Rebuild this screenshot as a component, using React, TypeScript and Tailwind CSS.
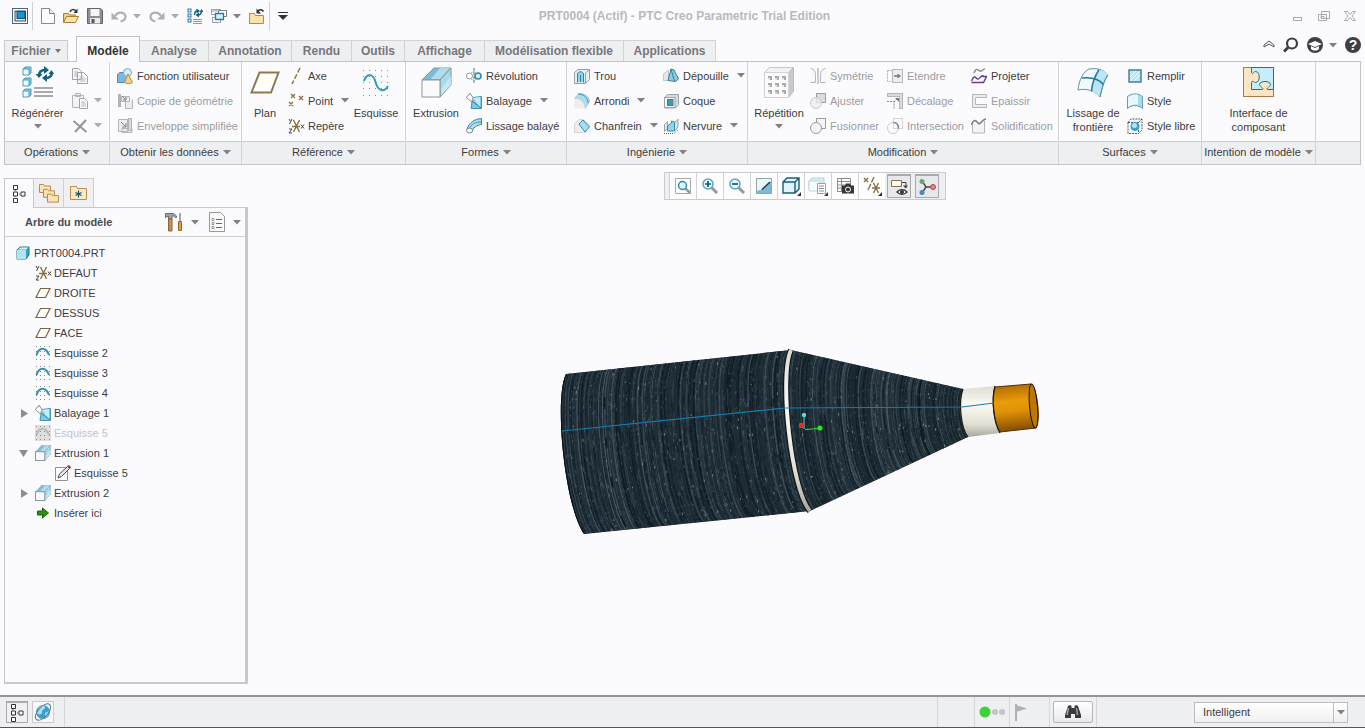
import type { ReactNode } from "react";

type IconProps = { w?: number; h?: number; box?: string; children: ReactNode };

function Svg({ w = 16, h = 16, box, children }: IconProps) {
  return (
    <svg
      width={w}
      height={h}
      viewBox={box ?? `0 0 ${w} ${h}`}
      fill="none"
      className="shrink-0"
      aria-hidden="true"
    >
      {children}
    </svg>
  );
}

function Caret({ light = false }: { light?: boolean }) {
  return (
    <Svg w={8} h={5}>
      <path d="M0 0h8L4 4.5z" fill={light ? "#acacb0" : "#808085"} />
    </Svg>
  );
}

/* ---------- quick access icons ---------- */

const AppIcon = () => (
  <Svg>
    <rect x=".5" y=".5" width="15" height="15" fill="#fff" stroke="#4d6474" />
    <rect x="3" y="3" width="10.5" height="10" fill="#d8eaf3" stroke="#2b4c60" />
    <rect x="5" y="3.5" width="8" height="7" fill="#1593d2" stroke="#14506f" />
  </Svg>
);

const NewDoc = () => (
  <Svg w={14}>
    <path d="M.5.5h8l5 5v10H.5z" fill="#fff" stroke="#85858a" />
    <path d="M8.5.5v5h5" fill="#eee" stroke="#85858a" />
  </Svg>
);

const OpenFolder = () => (
  <Svg>
    <path d="M.5 14V5.5h5l1 1.500h6v7z" fill="#f3cf83" stroke="#a87e34" />
    <path d="M.5 14.500 3.500 8.500H15.500l-3 6z" fill="#fce3a9" stroke="#a87e34" />
    <path d="M7 4c1-3 4-3 6-1" stroke="#333" strokeWidth="1.500" />
    <path d="M14.500.5v4.500h-4z" fill="#333" />
  </Svg>
);

const Save = () => (
  <Svg>
    <path d="M.5.5h13l2 2v13H.5z" fill="#8b8e96" stroke="#62656d" />
    <rect x="3.500" y="1" width="9" height="7" fill="#f4f5f7" />
    <rect x="3" y="10" width="10" height="5.500" fill="#e8e9ec" />
    <rect x="4.500" y="11" width="3" height="4" fill="#55585f" />
  </Svg>
);

const Undo = ({ flip = false }: { flip?: boolean }) => (
  <Svg>
    <g transform={flip ? "translate(16 0) scale(-1 1)" : undefined}>
      <path d="M4 8c3-5 10-4 10.500.5 0 3-2 4.500-5 5" stroke="#b0b0b4" strokeWidth="2.200" />
      <path d="M.5 4.500V11.500H8z" fill="#b0b0b4" />
    </g>
  </Svg>
);

const RegenSmall = () => (
  <Svg>
    {[1, 6, 11].map((y) => (
      <rect key={y} x="1" y={y} width="3" height="3" fill="#d8f1fb" stroke="#2e7d9f" />
    ))}
    <path d="M6 11.500h9M6 13.500h9M6 15.500h9" stroke="#98989c" />
    <path d="M7.500 7c0-3 1-4 3-4M14.500 3c0 3-1 4-4 4" stroke="#13607f" strokeWidth="1.500" />
    <path d="M9.500.5l3.500 2.500-3.500 2.500zM12 4.500v5L8.500 7zM12.500 4h4l-2-3z" fill="#13607f" />
  </Svg>
);

const WindowsIcon = () => (
  <Svg>
    <path d="M.5 1.500h9v5h-9zM.5 3h9" fill="#fff" stroke="#96a0a7" />
    <path d="M7.500 2.500h8v6h-8z" fill="#fff" stroke="#76828b" />
    <path d="M1.500 9.500h8v5h-8z" fill="#fff" stroke="#96a0a7" />
    <path d="M4.500 5.500h8v6h-8z" fill="#d7eefb" stroke="#2b7ca7" strokeWidth="1.300" />
  </Svg>
);

const CloseFolder = () => (
  <Svg>
    <path d="M.5 15.500V5.500h5l1 2h8v8z" fill="#fbe2a8" stroke="#b08a45" />
    <path d="M9 3c2-2 4-1.500 5.500.5" stroke="#333" strokeWidth="1.500" />
    <path d="M7.500.5v5h4.500z" fill="#333" />
  </Svg>
);

/* ---------- large ribbon icons ---------- */

const Regenerate = () => (
  <Svg w={32} h={34}>
    {[1, 12, 23].map((y) => (
      <g key={y} stroke="#4a9dbb" strokeLinejoin="round">
        <path d={`M1 ${y + 2}l2-2h6v6l-2 2z`} fill="#7dcbe5" />
        <rect x="1" y={y + 2} width="6" height="6" fill="#eefaff" />
      </g>
    ))}
    <path d="M12 22h19M12 26h19M12 30h19" stroke="#8d8d92" strokeWidth="1.500" />
    <path d="M17 10c0-4 2-6 6-6M30 6c0 4-2 6-6 6" stroke="#155f7c" strokeWidth="2.500" />
    <path d="M22 0l5 4-5 4zM25 8v8l-5-4zM13.500 8h7L17 12zM26.500 8H32l-2.500-4z" fill="#155f7c" />
  </Svg>
);

const Plane = ({ small = false }: { small?: boolean }) =>
  small ? (
    <Svg>
      <path d="M5.500 3.500h9.500L10.500 12.500H1z" fill="#fffdf8" stroke="#7a6544" strokeWidth="1.200" />
    </Svg>
  ) : (
    <Svg w={30} h={24}>
      <path d="M9.500 1.500h19L21 21.500H1.500z" fill="#fffefb" stroke="#8f7750" strokeWidth="2" />
    </Svg>
  );

const dots = (xs: number[], ys: number[]) =>
  ys.flatMap((y) => xs.map((x) => <rect key={`${x}-${y}`} x={x} y={y} width="1" height="1" fill="#8d8d90" />));

const SketchLarge = () => (
  <Svg w={28} h={30}>
    {dots([1, 7, 13, 19, 25], [2, 8, 14, 20, 27])}
    <path d="M2 13C5 5 11 5 13.500 14S22 25 26 18" stroke="#2f9cbe" strokeWidth="2" />
  </Svg>
);

const Extrude = ({ small = false }: { small?: boolean }) => (
  <Svg w={small ? 16 : 31} h={small ? 16 : 31} box="0 0 31 31">
    <path d="M1 13 13 1h17L19 13z" fill="#7fbbd2" stroke="#8299a5" />
    <path d="M19 13 30 1v17L19 30z" fill="#a7d9eb" stroke="#8299a5" />
    <path d="M10 12 19 1h10L19 12zM20 22 30 9v9L20 28z" fill="#d5f1fa" opacity=".6" />
    <rect x="1" y="13" width="18" height="17" fill="#fafafa" stroke="#8c979d" strokeWidth={small ? 2 : 1} />
  </Svg>
);

const Pattern = () => (
  <Svg w={30} h={31}>
    <path d="M.5 5.500 5.500.5h24l-5 5z" fill="#f2f2f4" stroke="#c6c6ca" />
    <path d="M24.500 5.500l5-5v24l-5 6z" fill="#c9c9cd" stroke="#bdbdc1" />
    <rect x=".5" y="5.500" width="24" height="25" fill="#fbfbfc" stroke="#d2d2d6" />
    {[9, 16, 23].map((y) =>
      [4, 11, 18].map((x) => (
        <g key={`${x}-${y}`}>
          <rect x={x} y={y} width="4" height="4" fill="#a9a9ae" />
          <rect x={x} y={y + 2} width="2" height="2" fill="#e6e6e9" />
        </g>
      )),
    )}
  </Svg>
);

const BoundaryBlend = () => (
  <Svg w={32} h={30}>
    <path d="M1 22C2 12 6 4 12 1c8-1 14 0 19 6-4 5-6 13-8 22-5-6-13-9-22-7z" fill="#effafe" stroke="#6d8c99" />
    <path d="M22 1.500c4 1 7 2 9 5.500-4 5-6 13-8 22-2-2-5-4-8-5.500C15 15 18 8 22 1.500z" fill="#b8e6f5" />
    <path d="M31 7c-4 5-6 13-8 22" stroke="#3b87a4" />
    <path d="M22 1.500C18 8 15 15 14.500 23.500M5 10c9-1 17 1 21.500 6.500" stroke="#237a9c" strokeWidth="1.500" />
  </Svg>
);

const ComponentInterface = () => (
  <Svg w={32} h={31}>
    <rect x=".5" y=".5" width="30" height="29" fill="#fde5c3" stroke="#a97b4a" />
    <path
      d="M8.500.5h22v22h-6c-2-1 3-3 3-5 0-4-11-4-11 0 0 2 5 4 3 5h-11v-7c1-3 2 0 4 0 5 0 5-11 0-11-2 0-3 4-4 1z"
      fill="#c5edfa"
      stroke="#28708d"
    />
  </Svg>
);

/* ---------- small ribbon icons ---------- */

const gray = "#b4b4b9";

const Copy = () => (
  <Svg>
    <path d="M.5.5h6l3 3v8h-9zM5.500 4.500h6l4 4v7h-10z" fill="#f8f8fa" stroke="#a2a2a7" />
    <path d="M2 4h4M2 6h3M2 8h3M7.500 9h4M7.500 11h6M7.500 13h6" stroke={gray} />
  </Svg>
);
const Paste = () => (
  <Svg>
    <path d="M.5 2.500h11v12H.5zM3.500.5h5v3h-5z" fill="#f4f4f6" stroke={gray} />
    <path d="M7.500 5.500h5l3 3v7h-8z" fill="#fff" stroke="#a2a2a7" />
    <path d="M9 9h4M9 11h5M9 13h5" stroke={gray} />
  </Svg>
);
const Delete = () => (
  <Svg>
    <path d="M1.500 3l13 11M14 2 3 14" stroke="#98989c" strokeWidth="2.200" />
  </Svg>
);
const UserFunction = () => (
  <Svg>
    <path d="M.5 6.500 3 4.500h8v7l-2 3H.5z" fill="#7cb8dd" stroke="#4d8cb5" />
    <circle cx="10.500" cy="4.500" r="4" fill="#d6eefa" stroke="#7ba9c2" />
    <path d="M11 6l4.500 8.500c-2 1.500-6 1.500-8 0z" fill="#f2d28a" stroke="#b48e45" />
  </Svg>
);
const CopyGeometry = () => (
  <Svg>
    <path d="M4.500 3.500h8v5h-8zM8.500 6.500v9h7v-9" fill="#ececef" stroke={gray} />
    <path d="M1 1h3v13H1z" fill="#b2b2b7" />
    <path d="M5 3l4 4M9 4v3H6" stroke="#808085" />
  </Svg>
);
const Shrinkwrap = () => (
  <Svg>
    <path d="M1.500 1.500h9v12h-9zM5 10.500h10v4H5z" fill="#ececef" stroke={gray} />
    <path d="M11.500.5h3v12h-3z" fill="#dadade" stroke="#b0b0b4" />
    <path d="M4 4l5 5M9 5v4H5" stroke="#808085" />
  </Svg>
);
const Axis = () => (
  <Svg>
    <path d="M12 0 4 16" stroke="#8a7144" strokeWidth="1.500" strokeDasharray="5 2" />
  </Svg>
);
const cross = (x: number, y: number) => `M${x} ${y}l4 4m0-4l-4 4`;
const Points = () => (
  <Svg>
    <path d={cross(3, 1) + cross(11, 3) + cross(1, 9)} stroke="#8a7144" strokeWidth="1.400" />
  </Svg>
);
const Csys = () => (
  <Svg w={17}>
    <path d="M4 8.500h8M5.500 2l6 12M11.500 2l-6 12" stroke="#8a7144" strokeWidth="1.400" />
    <path d="M1 1l1.500 2.500M4 1 1.500 6M1 11h3l-3 4h3M13 6.500l3 4m0-4l-3 4" stroke="#444" />
  </Svg>
);
const Revolve = () => (
  <Svg>
    <circle cx="3.500" cy="8" r="3" fill="#fff" stroke="#8c9aa4" />
    <circle cx="12" cy="8" r="3" fill="#cfeffb" stroke="#2c86aa" strokeWidth="1.500" />
    <path d="M8 0v16" stroke="#5f6d77" strokeDasharray="3 1" />
    <path d="M5 5c2-1.500 4-1.500 6 0M5 11c2 1.500 4 1.500 6 0" stroke="#8cc4da" />
  </Svg>
);
const Sweep = () => (
  <Svg>
    <path d="M.5 4.500 4 .5l3 4 8.500-1v12H5l1-7z" fill="#7cc9e2" stroke="#4593ae" />
    <path d="M.5 4.500 4 .5l3 4L5.500 9z" fill="#fff" stroke="#8d9ba3" />
    <path d="M7 5l7 9V4z" fill="#c2ecf8" />
    <path d="M6 8l9 7" stroke="#3487a5" />
  </Svg>
);
const SweptBlend = () => (
  <Svg>
    <path d="M1 11C3 5 8 1 15.500.5v6C10 7 7 10 6 14z" fill="#a9dff0" stroke="#467f98" />
    <path d="M4 9c3-4 6-5 11-5" stroke="#4b92ae" />
    <ellipse cx="3.500" cy="12.500" rx="3" ry="2.500" fill="#fff" stroke="#6f8691" />
  </Svg>
);
const Hole = () => (
  <Svg>
    <path d="M.5 4.500 4 1.500h11.500v10l-4 4H.5z" fill="#e6f0f4" stroke="#92a1a8" />
    <path d="M4 6c0-3 5-3 5 0v8H4z" fill="#8fd5eb" />
    <path d="M3.500 14.500V6c0-3 6-3 6 0v8.500M6.500 7v7" stroke="#2588ae" />
    <path d="M11.500 5v10M11.500 5l4-3.500" stroke="#92a1a8" />
  </Svg>
);
const Round = () => (
  <Svg>
    <path d="M.5 5.500 5 .5c6 0 10 3 10.500 8l-4.500 7c0-5-3-10-10.500-10z" fill="#a8def0" stroke="#b5c3c9" />
    <path d="M.5 5.500C7 5.500 11 10 11 15.500H.5z" fill="#ededf0" />
    <path d="M4 1c6 0 10 4 10 9" stroke="#3592b5" />
  </Svg>
);
const Chamfer = () => (
  <Svg>
    <path d="M.5 5.500 5 1.500h4l6.500 6-4 7H.5z" fill="#ececef" stroke="#d5d7d9" />
    <path d="M5 6l4-4 6.500 7-4.500 5z" fill="#a4def2" stroke="#3889a9" />
  </Svg>
);
const Draft = () => (
  <Svg>
    <path d="M.5 12.500V6l5-4v10.500z" fill="#e4e7e9" stroke="#c0c8cc" />
    <path d="M5 12.500 8 1l3 1 4.500 9-3 2.500z" fill="#8acee4" stroke="#3b7b94" />
    <path d="M8 1l3.500 12" stroke="#3b7b94" />
  </Svg>
);
const Shell = () => (
  <Svg>
    <path d="M1.500 4.500l3-3h11v10l-3 3.500h-11z" fill="#d7dbde" stroke="#9aa4a9" />
    <rect x="1.500" y="4.500" width="10.500" height="10" fill="#f7f8f9" stroke="#9aa4a9" />
    <rect x="4.500" y="6.500" width="5.500" height="6" fill="#3a9cb4" stroke="#587985" />
  </Svg>
);
const Rib = () => (
  <Svg>
    <path d="M1 15.500h10l4.500-4" stroke="#5b6a72" strokeDasharray="1 1" />
    <path d="M1.500 6.500v7l3-3v-7zM11.500 5v8l3.500-4V1z" fill="#dce5e9" stroke="#96a5ac" />
    <path d="M4.500 13V8l4-3v-2l3 1v9z" fill="#8dd5eb" stroke="#348db0" />
  </Svg>
);
const Mirror = () => (
  <Svg>
    <path d="M.5.5c4 1 5 3 5 7v7h-5M15.500.5c-4 1-5 3-5 7v7h5" fill="#f8f8fa" stroke={gray} />
    <path d="M8 0v16" stroke="#99999e" />
  </Svg>
);
const Trim = () => (
  <Svg>
    <path d="M6.500.5h9v9h-9z" fill="#dcdce0" stroke="#9d9da2" />
    <circle cx="6" cy="10" r="5.500" fill="#ececef" fillOpacity=".8" stroke="#cacace" />
  </Svg>
);
const Merge = () => (
  <Svg>
    <path d="M6.500 4.500v-4h9v10h-4" fill="#f6f6f8" stroke="#99999e" />
    <circle cx="6" cy="10" r="5.500" fill="#f5f5f7" stroke="#99999e" />
  </Svg>
);
const Extend = () => (
  <Svg>
    <path d="M.5 2.500h5v11h-5z" stroke={gray} strokeDasharray="2 1" />
    <path d="M5.500 1.500h10v13h-10z" fill="#ededf0" stroke={gray} />
    <path d="M7 8h5" stroke="#77777c" strokeWidth="1.500" />
    <path d="M10.500 5.500l3.500 2.500-3.500 2.500z" fill="#77777c" />
  </Svg>
);
const Offset = () => (
  <Svg>
    <path d="M.5.5h15v15h-3V3.500H.5z" fill="#dcdce0" stroke={gray} />
    <path d="M0 8.500h7v7M7 9l4-4" stroke="#88888d" strokeDasharray="2 1" />
    <path d="M8 5h4v4z" fill="#77777c" />
  </Svg>
);
const Intersect = () => (
  <Svg>
    <path d="M6.500.5h9v10h-9z" stroke="#d3d3d7" />
    <circle cx="6" cy="10" r="5.500" stroke="#cacace" />
    <path d="M6.500 4.500c4 0 5 3 5 6" stroke="#88888d" strokeWidth="1.500" />
  </Svg>
);
const Project = () => (
  <Svg>
    <path d="M3 5c2-6 4-3 6-2s4-3 5-2" stroke="#88888f" strokeWidth="1.500" />
    <path d="M.5 14.500h12l3-6h-4M.5 13c3-7 4-3 6-2s4-5 6-3" stroke="#68388f" strokeWidth="1.400" />
  </Svg>
);
const Thicken = () => (
  <Svg>
    <path d="M15.500 1.500H1.500v13h14v-3h-11v-7h11z" fill="#ececef" stroke={gray} />
  </Svg>
);
const Solidify = () => (
  <Svg>
    <path d="M1.500 5v10h12V3" fill="#f3f3f5" stroke={gray} />
    <path d="M0 7c3-6 5-5 7-2s4-4 8-4" stroke="#7d7d82" strokeWidth="1.600" />
  </Svg>
);
const Fill = () => (
  <Svg>
    <rect x="2" y="2" width="12" height="12" fill="#b8e7f7" stroke="#2b708e" strokeWidth="1.300" />
    <path d="M3 9l6-6M3 13 13 3M7 13l6-6" stroke="#eefaff" />
  </Svg>
);
const StyleIcon = () => (
  <Svg>
    <path d="M.5 15.500v-12C5 0 11 0 15.500 3.500v12c-4-4-11-4-15 0z" fill="#a4dcf0" stroke="#6c99ac" />
    <path d="M1 4c3-2 6-3 10-2v10c-4-1-7 0-10 2z" fill="#e6f8fd" />
  </Svg>
);
const Freestyle = () => (
  <Svg>
    <path d="M1 4.500 4 1h11v11l-3.500 3.500H1zM1 4.500h10.500v11M11.500 4.500 15 1" stroke="#4b5961" strokeDasharray="2 1" />
    <circle cx="8" cy="8.500" r="4.500" fill="#3aa1c8" />
    <circle cx="7.500" cy="7.500" r="2.500" fill="#b6e4f4" />
  </Svg>
);

/* ---------- view toolbar and tree icons ---------- */

const Lens = ({ sign }: { sign: string }) => (
  <Svg w={18} h={18}>
    <path d="M10 10l6 6" stroke="#98989d" strokeWidth="3" />
    <circle cx="7" cy="7" r="5" fill="#e6f8fe" stroke="#5ba6c2" strokeWidth="1.500" />
    <path d={sign} stroke="#145c79" strokeWidth="1.700" />
  </Svg>
);
const Refit = () => (
  <Svg w={18} h={18}>
    <path d="M1.500 1.500h15v15h-15z" fill="#fff" stroke="#a8a8ad" />
    <path d="M11 11l5 5" stroke="#98989d" strokeWidth="2.500" />
    <circle cx="8.500" cy="8.500" r="4" fill="#dff6fd" stroke="#338bab" strokeWidth="1.500" />
  </Svg>
);
const Repaint = () => (
  <Svg w={18} h={18}>
    <path d="M1.500 1.500h15v15h-15z" fill="#c9eaf5" stroke="#93a2aa" />
    <path d="M2 12 16 4v12H2z" fill="#7bbcd4" />
    <path d="M2 2h14v3L7 12 2 14z" fill="#e9f7fb" />
    <path d="M15 5 7 12.500" stroke="#203b48" strokeWidth="1.500" />
  </Svg>
);
const Corner = () => <path d="M20 16v4h-4z" fill="#333" />;
const DisplayStyle = () => (
  <Svg w={20} h={20}>
    <path d="M2 6l4-4h12v11l-4 4H2zM2 6h12v11M14 6l4-4" fill="#dff5fd" stroke="#175d7a" strokeWidth="1.400" />
    <Corner />
  </Svg>
);
const SavedViews = () => (
  <Svg w={20} h={20}>
    <path d="M1 5l3-3h12v11H1z" fill="#d3eef8" stroke="#b0d2df" />
    <path d="M1 5h11v10H1z" fill="#f7fcfe" stroke="#c4d3d9" />
    <path d="M9.500 7.500h8v10h-8z" fill="#fff" stroke="#a0a0a4" />
    <path d="M11 10h5M11 12.500h5M11 15h5" stroke="#8c8c90" />
    <Corner />
  </Svg>
);
const ViewManager = () => (
  <Svg w={18} h={18}>
    <path d="M1.500 1.500h13v13h-13zM1.500 4.500h13M1.500 8h13M1.500 11h13M5.500 2v12" fill="#fff" stroke="#8b8b90" />
    <path d="M6 8.500h3l1-2h4l1 2h3v8H6z" fill="#36363a" />
    <circle cx="12" cy="12.500" r="2.500" fill="#36363a" stroke="#fff" />
  </Svg>
);
const DatumFilter = () => (
  <Svg w={20} h={20}>
    <path d={cross(2, 2) + "M12 1 6 14"} stroke="#8a7144" strokeWidth="1.400" />
    <path d="M10 12h8M11.500 7l5 10M16.500 7l-5 10" stroke="#8a7144" strokeWidth="1.400" />
    <path d="M8 6l2 2" stroke="#fdfdfe" strokeWidth="1.500" />
    <Corner />
  </Svg>
);
const Annotations = () => (
  <Svg w={18} h={18}>
    <path d="M1.500 2.500h10v6h-10z" fill="#fffdf6" stroke="#8a7144" />
    <path d="M12 4.500h4v5" stroke="#444" />
    <path d="M13 7.500h5l-2.500 3z" fill="#444" />
    <path d="M7 14c3-3 7-3 10 0-3 3-7 3-10 0z" fill="#fff" stroke="#333" strokeWidth="1.300" />
    <circle cx="12" cy="14" r="2" fill="#333" />
  </Svg>
);
const SpinCenter = () => (
  <Svg w={18} h={18}>
    <path d="M4 3l4 6h7M8 9l-4 6" stroke="#44444a" strokeWidth="1.400" />
    <circle cx="4" cy="3.500" r="2.500" fill="#67a868" />
    <circle cx="15" cy="9" r="2.500" fill="#e08582" stroke="#aa4b49" />
    <circle cx="4" cy="14.500" r="2.500" fill="#4b87b5" />
  </Svg>
);
const TreeIcon = () => (
  <Svg w={14} h={18}>
    <path d="M3 3v12M3 9h8" stroke="#555" strokeDasharray="1 1" />
    <path d="M1.500.5h4v4h-4zM1.500 7h4v4h-4zM1.500 13.500h4v4h-4zM9 7h4v4H9z" fill="#fff" stroke="#333" />
  </Svg>
);
const folder = (x: number, y: number) => `M${x} ${y + 9}v-8h4l1 1.500h6v6.500z`;
const Folders = () => (
  <Svg w={20} h={20}>
    {[0, 4, 8].map((n) => (
      <path key={n} d={folder(0.5 + n, 0.5 + n * 1.2)} fill="#fbe3b2" stroke="#b38e50" />
    ))}
  </Svg>
);
const Favorites = () => (
  <Svg w={17} h={16}>
    <path d="M.5 14.500V1.500h6l1 2h9v11z" fill="#fce9c1" stroke="#b38e50" />
    <path d="M8.500 5.500v7M5.500 7.500l6 3M11.500 7.500l-6 3" stroke="#164f69" strokeWidth="1.200" />
  </Svg>
);
const Tools = () => (
  <Svg w={18} h={20}>
    <path d="M.5 5.500V1.500h8l3 2.500v1.500h-1l-2-1.500H7v3H3.500V4z" fill="#a0a4aa" stroke="#6a6d72" />
    <path d="M3.500 7H7v12H3.500z" fill="#c59254" stroke="#8b6433" />
    <path d="M15 1v9" stroke="#88888d" strokeWidth="1.500" />
    <path d="M13.500 9.500h3v9h-3z" fill="#dda243" stroke="#9a6826" />
  </Svg>
);
const ListDoc = () => (
  <Svg w={16} h={20}>
    <path d="M.5.5h11l4 4v15H.5z" fill="#fafafb" stroke="#98989d" />
    <path d="M7 7.500h6M7 11.500h6M7 15.500h6" stroke="#66666b" />
    <path d="M3 6.500h2v2H3zM3 10.500h2v2H3zM3 14.500h2v2H3z" stroke="#88888d" strokeWidth=".8" />
  </Svg>
);
const Part = () => (
  <Svg w={14} h={14}>
    <path d="M1 4l3-3h9v8l-3 4H1z" fill="#3e9fc4" stroke="#28708c" />
    <path d="M1 4h9v9H1z" fill="#aee5f7" />
    <path d="M2 3.500 4.500 1.500h8L10 3.500z" fill="#dff7fe" />
  </Svg>
);
const SketchSmall = ({ dim = false }: { dim?: boolean }) => (
  <Svg>
    {dim && <rect width="16" height="16" fill="#dfdfdf" />}
    {dots([1, 5, 9, 14], [1, 6, 10, 14])}
    <path d="M1.500 10C4 1.500 11 1.500 14 10" stroke={dim ? "#b9b9b9" : "#398eae"} strokeWidth="2" />
  </Svg>
);
const EditSketch = () => (
  <Svg>
    <path d="M.5 2.500h12v13H.5z" fill="#fff" stroke="#929297" />
    <path d="M3 13l1.500-4 8-7.500 2 2-8 8z" fill="#e7e7e9" stroke="#4b4b4f" />
    <path d="M12 1l2-1 2 2-1 2z" fill="#a33835" />
  </Svg>
);
const Insert = () => (
  <Svg w={12} h={12}>
    <path d="M.5 4h5V1l6 5-6 5V8h-5z" fill="#2d8c18" stroke="#1c650d" />
  </Svg>
);

/* ---------- ribbon building blocks ---------- */

type CmdProps = { icon: ReactNode; label: string; caret?: boolean; off?: boolean };

function Cmd({ icon, label, caret, off }: CmdProps) {
  return (
    <button
      disabled={off}
      className="flex h-[25px] items-center gap-1 whitespace-nowrap text-[#3c3c40] disabled:text-[#9b9b9f]"
    >
      <span className="flex w-4 justify-center">{icon}</span>
      <span>{label}</span>
      {caret && (
        <span className="ml-1">
          <Caret />
        </span>
      )}
    </button>
  );
}

function Big({ icon, lines, caret, width }: { icon: ReactNode; lines: string[]; caret?: boolean; width: string }) {
  return (
    <button className={`flex flex-col items-center ${width}`}>
      <span className="mb-1 flex h-[39px] items-center">{icon}</span>
      {lines.map((line) => (
        <span key={line} className="leading-[14px] whitespace-nowrap">
          {line}
        </span>
      ))}
      {caret && (
        <span className="pt-1">
          <Caret />
        </span>
      )}
    </button>
  );
}

function Group({ title, width, pad = "", children }: { title: string; width: string; pad?: string; children: ReactNode }) {
  return (
    <section className={`flex shrink-0 flex-col border-r border-[#d3d3d6] ${width}`}>
      <div className={`flex h-[79px] items-start pt-px ${pad}`}>{children}</div>
      <button className="flex h-[23px] items-center justify-center gap-1 border-t border-[#cbcbce] bg-[#eeeff1] pb-0.5 whitespace-nowrap">
        {title}
        <Caret />
      </button>
    </section>
  );
}

function Column({ width = "", children }: { width?: string; children: ReactNode }) {
  return <div className={`flex flex-col items-start ${width}`}>{children}</div>;
}

function QuickAccess() {
  return (
    <div className="flex items-center gap-2">
      <div className="flex items-center gap-1">
        <button aria-label="Creo"><AppIcon /></button>
        <span className="h-7 w-px bg-[#d0d0d3]" />
      </div>
      <button aria-label="Nouveau"><NewDoc /></button>
      <button aria-label="Ouvrir"><OpenFolder /></button>
      <button aria-label="Enregistrer"><Save /></button>
      <div className="flex items-center gap-1.5">
        <button aria-label="Annuler"><Undo /></button>
        <button aria-label="Historique d'annulation"><Caret light /></button>
      </div>
      <div className="flex items-center gap-1.5">
        <button aria-label="Rétablir"><Undo flip /></button>
        <button aria-label="Historique de rétablissement"><Caret light /></button>
      </div>
      <button aria-label="Régénérer"><RegenSmall /></button>
      <div className="flex items-center gap-1.5">
        <button aria-label="Fenêtres"><WindowsIcon /></button>
        <button aria-label="Liste des fenêtres"><Caret /></button>
      </div>
      <div className="flex items-center gap-1">
        <button aria-label="Fermer"><CloseFolder /></button>
        <span className="h-7 w-px bg-[#d0d0d3]" />
      </div>
      <button aria-label="Personnaliser">
        <Svg w={10} h={8}>
          <path d="M0 .5h10" stroke="#333" />
          <path d="M0 3h10L5 8z" fill="#333" />
        </Svg>
      </button>
    </div>
  );
}

function TitleBar() {
  return (
    <header className="grid h-8 grid-cols-[1fr_auto_1fr] items-center pr-2 pl-3">
      <QuickAccess />
      <h1 className="text-xs font-bold text-[#b9b9bd]">PRT0004 (Actif) - PTC Creo Parametric Trial Edition</h1>
      <div className="flex justify-end gap-3">
        <button aria-label="Réduire">
          <Svg><path d="M4.500 9.500h8v3h-8z" stroke="#a8a8ac" /></Svg>
        </button>
        <button aria-label="Restaurer">
          <Svg w={14}>
            <path d="M4.500 3.500h8v7h-8zM1.500 6.500h8v6h-8zM4 8.500h3v2H4z" fill="#fff" stroke="#a8a8ac" />
          </Svg>
        </button>
        <button aria-label="Fermer la fenêtre">
          <Svg w={14}>
            <path d="M1.500 3.500h3l2.500 3 2.500-3h3L9 8l3.500 4.500h-3L7 9.500l-2.500 3h-3L5 8z" stroke="#a8a8ac" />
          </Svg>
        </button>
      </div>
    </header>
  );
}

const tabs = [
  ["Analyse", "w-[69px]"],
  ["Annotation", "w-[83px]"],
  ["Rendu", "w-[60px]"],
  ["Outils", "w-[53px]"],
  ["Affichage", "w-[80px]"],
  ["Modélisation flexible", "w-[139px]"],
  ["Applications", "w-[92px]"],
];

function RibbonTabs() {
  return (
    <div className="flex h-[29px] items-end px-1 text-xs font-bold text-[#77777b]">
      <button className="mr-2 flex h-[21px] w-16 items-center justify-center gap-1 border border-b-0 border-[#cbcbce] bg-[#eeeff1]">
        Fichier <Svg w={6} h={4}><path d="M0 0h6L3 4z" fill="#77777c" /></Svg>
      </button>
      <nav className="flex items-end">
        <button className="z-10 -mb-px h-[26px] w-16 border border-b-0 border-[#c3c3c6] bg-[#fbfbfe] pt-0.5 text-[#333]">
          Modèle
        </button>
        {tabs.map(([name, width]) => (
          <button key={name} className={`h-[21px] border-t border-r border-[#d3d3d6] bg-[#eeeff1] whitespace-nowrap ${width}`}>
            {name}
          </button>
        ))}
      </nav>
      <div className="ml-auto flex items-center gap-2 pb-2">
        <button aria-label="Réduire le ruban">
          <Svg w={12} h={10}><path d="M1 5l5-4 5 4v2L6 4 1 7z" stroke="#55555a" /></Svg>
        </button>
        <button aria-label="Rechercher">
          <Svg>
            <circle cx="9" cy="6.500" r="5" stroke="#3f3f43" strokeWidth="2.200" />
            <path d="M5.500 10 1 14.500" stroke="#3f3f43" strokeWidth="3" />
          </Svg>
        </button>
        <button aria-label="Apprentissage" className="flex items-center gap-1.5">
          <Svg>
            <circle cx="8" cy="8" r="8" fill="#3f3f43" />
            <path d="M1 7l7-3 7 3-7 3z" fill="#fff" />
            <path d="M4 9v3c2 2 6 2 8 0V9l-4 2z" fill="#fff" />
          </Svg>
          <Caret />
        </button>
        <button aria-label="Aide" className="flex size-4 items-center justify-center rounded-full bg-[#3f3f43] text-sm leading-4 text-white">
          ?
        </button>
      </div>
    </div>
  );
}

function Ribbon() {
  return (
    <div className="mx-1 flex overflow-hidden border border-[#c3c3c6] whitespace-nowrap">
      <Group title="Opérations" width="w-[105px]">
        <Big icon={<Regenerate />} lines={["Régénérer"]} caret width="w-[65px]" />
        <div className="flex flex-col">
          <button aria-label="Copier" className="flex h-[25px] items-center pl-0.5"><Copy /></button>
          <button aria-label="Coller" className="flex h-[25px] items-center gap-1.5 pl-0.5"><Paste /><Caret light /></button>
          <button aria-label="Supprimer" className="flex h-[25px] items-center gap-1.5 pl-0.5"><Delete /><Caret light /></button>
        </div>
      </Group>
      <Group title="Obtenir les données" width="w-[132px]" pad="pl-[7px]">
        <Column>
          <Cmd icon={<UserFunction />} label="Fonction utilisateur" />
          <Cmd icon={<CopyGeometry />} label="Copie de géométrie" off />
          <Cmd icon={<Shrinkwrap />} label="Enveloppe simplifiée" off />
        </Column>
      </Group>
      <Group title="Référence" width="w-[164px]">
        <Big icon={<Plane />} lines={["Plan"]} width="w-[46px]" />
        <Column width="w-[60px]">
          <Cmd icon={<Axis />} label="Axe" />
          <Cmd icon={<Points />} label="Point" caret />
          <Cmd icon={<Csys />} label="Repère" />
        </Column>
        <Big icon={<SketchLarge />} lines={["Esquisse"]} width="w-[56px]" />
      </Group>
      <Group title="Formes" width="w-[161px]">
        <Big icon={<Extrude />} lines={["Extrusion"]} width="w-[60px]" />
        <Column>
          <Cmd icon={<Revolve />} label="Révolution" />
          <Cmd icon={<Sweep />} label="Balayage" caret />
          <Cmd icon={<SweptBlend />} label="Lissage balayé" />
        </Column>
      </Group>
      <Group title="Ingénierie" width="w-[181px]" pad="pl-[7px]">
        <Column width="w-[89px]">
          <Cmd icon={<Hole />} label="Trou" />
          <Cmd icon={<Round />} label="Arrondi" caret />
          <Cmd icon={<Chamfer />} label="Chanfrein" caret />
        </Column>
        <Column>
          <Cmd icon={<Draft />} label="Dépouille" caret />
          <Cmd icon={<Shell />} label="Coque" />
          <Cmd icon={<Rib />} label="Nervure" caret />
        </Column>
      </Group>
      <Group title="Modification" width="w-[311px]">
        <Big icon={<Pattern />} lines={["Répétition"]} caret width="w-[62px]" />
        <Column width="w-[77px]">
          <Cmd icon={<Mirror />} label="Symétrie" off />
          <Cmd icon={<Trim />} label="Ajuster" off />
          <Cmd icon={<Merge />} label="Fusionner" off />
        </Column>
        <Column width="w-[84px]">
          <Cmd icon={<Extend />} label="Etendre" off />
          <Cmd icon={<Offset />} label="Décalage" off />
          <Cmd icon={<Intersect />} label="Intersection" off />
        </Column>
        <Column>
          <Cmd icon={<Project />} label="Projeter" />
          <Cmd icon={<Thicken />} label="Epaissir" off />
          <Cmd icon={<Solidify />} label="Solidification" off />
        </Column>
      </Group>
      <Group title="Surfaces" width="w-[143px]">
        <Big icon={<BoundaryBlend />} lines={["Lissage de", "frontière"]} width="w-[68px]" />
        <Column>
          <Cmd icon={<Fill />} label="Remplir" />
          <Cmd icon={<StyleIcon />} label="Style" />
          <Cmd icon={<Freestyle />} label="Style libre" />
        </Column>
      </Group>
      <Group title="Intention de modèle" width="w-[114px]" pad="justify-center">
        <Big icon={<ComponentInterface />} lines={["Interface de", "composant"]} width="w-[80px]" />
      </Group>
      <div className="flex flex-1 flex-col justify-end">
        <div className="h-[23px] border-t border-[#cbcbce] bg-[#eeeff1]" />
      </div>
    </div>
  );
}

/* ---------- model tree ---------- */

type Node = { label: string; icon: ReactNode; level: 0 | 1 | 2; arrow?: "open" | "closed"; off?: boolean };

const nodes: Node[] = [
  { label: "PRT0004.PRT", icon: <Part />, level: 0 },
  { label: "DEFAUT", icon: <Csys />, level: 1 },
  { label: "DROITE", icon: <Plane small />, level: 1 },
  { label: "DESSUS", icon: <Plane small />, level: 1 },
  { label: "FACE", icon: <Plane small />, level: 1 },
  { label: "Esquisse 2", icon: <SketchSmall />, level: 1 },
  { label: "Esquisse 3", icon: <SketchSmall />, level: 1 },
  { label: "Esquisse 4", icon: <SketchSmall />, level: 1 },
  { label: "Balayage 1", icon: <Sweep />, level: 1, arrow: "closed" },
  { label: "Esquisse 5", icon: <SketchSmall dim />, level: 1, off: true },
  { label: "Extrusion 1", icon: <Extrude small />, level: 1, arrow: "open" },
  { label: "Esquisse 5", icon: <EditSketch />, level: 2 },
  { label: "Extrusion 2", icon: <Extrude small />, level: 1, arrow: "closed" },
  { label: "Insérer ici", icon: <Insert />, level: 1 },
];

const indents = ["pl-[10px]", "pl-[14px]", "pl-[50px]"];

function ModelTree() {
  return (
    <aside className="ml-1 flex w-[244px] shrink-0 flex-col pt-[13px] pb-[11px]">
      <div className="flex h-[29px]">
        <button aria-label="Arbre du modèle" className="z-10 -mb-px flex w-[30px] items-center justify-center border border-b-0 border-[#c8c8cb] bg-[#fbfbfe]">
          <TreeIcon />
        </button>
        <button aria-label="Dossiers" className="flex w-[30px] items-center justify-center border-t border-r border-[#cfcfd2] bg-[#f0f0f2]">
          <Folders />
        </button>
        <button aria-label="Favoris" className="flex w-[30px] items-center justify-center border-t border-r border-[#cfcfd2] bg-[#f0f0f2]">
          <Favorites />
        </button>
      </div>
      <div className="flex-1 border border-r-[3px] border-b-2 border-[#c8c8cb]">
        <div className="flex h-[29px] items-center border-b border-[#cfcfd2] pr-1 pl-5">
          <h2 className="flex-1 font-bold text-[#4c4c50]">Arbre du modèle</h2>
          <button aria-label="Réglages" className="mr-2.5 flex items-center gap-2"><Tools /><Caret /></button>
          <button aria-label="Affichage" className="flex items-center gap-2"><ListDoc /><Caret /></button>
        </div>
        <ul className="pt-[6px]">
          {nodes.map((n, i) => (
            <li key={i} className={`flex h-5 items-center ${indents[n.level]}`}>
              {n.level === 1 && (
                <span className="flex w-4 items-center">
                  {n.arrow && (
                    <button aria-label={n.label}>
                      <Svg w={10} h={9}>
                        <path d={n.arrow === "open" ? "M0 1h9L4.500 8z" : "M2 0v9l7-4.500z"} fill="#8c8c91" />
                      </Svg>
                    </button>
                  )}
                </span>
              )}
              <span className="mr-[3px] flex w-4 justify-center">{n.icon}</span>
              <span className={n.off ? "text-[#c4c4c7]" : ""}>{n.label}</span>
            </li>
          ))}
        </ul>
      </div>
    </aside>
  );
}

/* ---------- bottle model ---------- */

// small linear congruential generator, so the texture is stable between renders
function makeRandom(seed: number) {
  let s = seed;
  return () => {
    s = (s * 1664525 + 1013904223) % 4294967296;
    return s / 4294967296;
  };
}

// section curves: start, two control points, end
const bottom = [567, 374, 555, 397, 565, 505, 585, 534];
const shoulder = [792, 350, 780, 375, 792, 490, 811, 511];
const neck = [964, 389, 959, 402, 962, 428, 969, 437];

const mix = (a: number[], b: number[], t: number) => a.map((v, i) => v + (b[i] - v) * t);
const curve = (p: number[]) => `M${p[0]} ${p[1]}C${p[2]} ${p[3]} ${p[4]} ${p[5]} ${p[6]} ${p[7]}`;

function pointOn(p: number[], t: number) {
  const u = 1 - t;
  const k = [u * u * u, 3 * t * u * u, 3 * t * t * u, t * t * t];
  return [
    k[0] * p[0] + k[1] * p[2] + k[2] * p[4] + k[3] * p[6],
    k[0] * p[1] + k[1] * p[3] + k[2] * p[5] + k[3] * p[7],
  ];
}

function buildTexture() {
  const rnd = makeRandom(41);
  const tones = ["#0c171d", "#121f27", "#1b2932", "#25343e", "#30404a", "#3d4e59", "#536670"];
  const out: ReactNode[] = [];
  const section = (a: number[], b: number[], count: number, name: string) => {
    for (let i = 0; i < count; i++) {
      const light = rnd();
      out.push(
        <path
          key={`${name}${i}`}
          d={curve(mix(a, b, rnd()))}
          stroke={tones[Math.floor(Math.pow(light, 1.4) * 7)]}
          strokeWidth={0.5 + rnd()}
          strokeDasharray={i % 3 ? `${10 + rnd() * 60} ${rnd() * 20}` : undefined}
          opacity={0.35 + rnd() * 0.35}
        />,
      );
    }
    for (let i = 0; i < count * 5; i++) {
      const p = mix(a, b, rnd());
      const t = rnd();
      const [x, y] = pointOn(p, t);
      const [x2, y2] = pointOn(p, Math.min(1, t + 0.006 + rnd() * 0.014));
      out.push(
        <path
          key={`${name}s${i}`}
          d={`M${x} ${y}L${x2} ${y2}`}
          stroke={rnd() > 0.5 ? "#74858e" : "#0a1318"}
          strokeWidth=".8"
          opacity={0.15 + rnd() * 0.4}
        />,
      );
    }
    for (let i = 0; i < count / 6; i++) {
      const [x, y] = pointOn(mix(a, b, rnd()), rnd());
      out.push(<rect key={`${name}d${i}`} x={x} y={y} width="1" height={1 + rnd() * 2} fill="#a3b1b8" opacity=".6" />);
    }
  };
  section(bottom, shoulder, 420, "b");
  section(shoulder, neck, 300, "c");
  return out;
}

const texture = buildTexture();

function Bottle() {
  return (
    <svg width="490" height="195" viewBox="561 345 490 195" fill="none" className="max-w-full" role="img" aria-label="PRT0004">
      <defs>
        <linearGradient id="label" x1="0" y1="0" x2="0" y2="1">
          <stop offset="0" stopColor="#dddbd2" />
          <stop offset=".35" stopColor="#fbfaf3" />
          <stop offset=".75" stopColor="#e2dfd4" />
          <stop offset="1" stopColor="#a8a59c" />
        </linearGradient>
        <linearGradient id="gold" x1="0" y1="0" x2="0.1" y2="1">
          <stop offset="0" stopColor="#a76400" />
          <stop offset=".4" stopColor="#e99c09" />
          <stop offset=".6" stopColor="#df9205" />
          <stop offset="1" stopColor="#874e00" />
        </linearGradient>
        <clipPath id="shape">
          <path d="M567 374 792 350 964 389C959 402 962 428 969 437L811 511 585 534C565 505 555 397 567 374z" />
        </clipPath>
      </defs>
      <g clipPath="url(#shape)">
        <rect x="560" y="345" width="420" height="195" fill="#202e37" />
        {texture}
        <path d={curve(bottom)} stroke="#07131a" strokeWidth="2" />
      </g>
      <path d={curve(shoulder)} stroke="#0b1318" strokeWidth="6" />
      <path d={curve(shoulder)} stroke="url(#label)" strokeWidth="4" />
      <path d="M964 389 996 386C992 400 995 423 1001 433L969 437C962 428 959 402 964 389z" fill="url(#label)" />
      <path d="M996 387 1032 384C1038 386 1042 421 1037 428L1001 432C995 423 992 400 996 387z" fill="url(#gold)" stroke="#513108" />
      <path d="M996 386C992 400 995 423 1001 433M964 389C959 402 962 428 969 437" stroke="#171613" strokeWidth="1.200" />
      <ellipse cx="1034.500" cy="406" rx="4" ry="22" transform="rotate(-5 1034.500 406)" fill="#bd7605" stroke="#171613" />
      <path d="M563 431 786 408 963 407 995 403" stroke="#147eb3" strokeWidth="1.200" />
      <path d="M805 416v13" stroke="#65d4d8" />
      <path d="M806 429.500 820 428.500" stroke="#42df31" />
      <circle cx="805" cy="415" r="2.200" fill="#54dada" />
      <circle cx="821" cy="428" r="2.600" fill="#32e221" />
      <rect x="800" y="423" width="5" height="5" rx="1" fill="#ed2b23" />
    </svg>
  );
}

const viewTools: [string, ReactNode][] = [
  ["Réajuster", <Refit />],
  ["Zoom avant", <Lens sign="M7 4v6M4 7h6" />],
  ["Zoom arrière", <Lens sign="M4 7h6" />],
  ["Redessiner", <Repaint />],
  ["Style d'affichage", <DisplayStyle />],
  ["Vues enregistrées", <SavedViews />],
  ["Gestionnaire de vues", <ViewManager />],
  ["Filtres d'affichage", <DatumFilter />],
];

function Viewport() {
  return (
    <main className="flex min-w-0 flex-1 flex-col items-center pt-[7px] pr-1">
      <div className="flex h-[28px] border border-[#cbcbce] bg-[#eeeff1] px-1">
        {viewTools.map(([name, icon]) => (
          <button key={name} aria-label={name} className="flex w-[27px] items-center justify-center border-l border-[#d3d3d6] bg-[#fdfdfe]">
            {icon}
          </button>
        ))}
        <button aria-label="Annotations" aria-pressed="true" className="mx-0.5 my-px flex w-6 items-center justify-center border border-t-2 border-[#aaaaae] bg-[#e7e8eb]">
          <Annotations />
        </button>
        <button aria-label="Centre de rotation" aria-pressed="true" className="mx-0.5 my-px flex w-6 items-center justify-center border border-t-2 border-[#aaaaae] bg-[#e7e8eb]">
          <SpinCenter />
        </button>
      </div>
      <div className="pt-[145px]">
        <Bottle />
      </div>
    </main>
  );
}

function StatusBar() {
  return (
    <footer className="flex h-[33px] shrink-0 items-stretch border-t-2 border-b border-t-[#949498] border-b-[#55555a] bg-[#eeeff1] pr-[17px] pl-[6px]">
      <div className="flex items-center gap-1 border-r border-[#d6d6d9] pr-2.5">
        <button aria-label="Arbre" className="flex h-[22px] w-[22px] items-center justify-center border border-t-2 border-[#aaaaae] bg-[#f0f0f2]">
          <TreeIcon />
        </button>
        <button aria-label="Navigateur" className="flex h-[22px] w-[22px] items-center justify-center border border-[#cbcbce] bg-[#f8f8fa]">
          <Svg w={18} h={18}>
            <circle cx="9" cy="9" r="7" fill="#3d9dcf" />
            <path d="M4 5c3-3 6-3 7-1s-4 3-3 5-3 4-5 1zM11 10l4-2c0 4-2 6-4 7z" fill="#a6ddf3" />
            <ellipse cx="9" cy="9" rx="10" ry="5" transform="rotate(-48 9 9)" stroke="#4c7689" />
          </Svg>
        </button>
      </div>
      <div className="ml-auto w-[37px] border-l border-[#d6d6d9]" />
      <div className="flex w-9 items-center justify-center border-x border-[#d6d6d9]">
        <Svg w={28} h={12}>
          <circle cx="7" cy="6" r="5.500" fill="#42cf3e" />
          <circle cx="17" cy="6" r="3" fill="#c4c4c8" />
          <circle cx="24" cy="6" r="3" fill="#c4c4c8" />
        </Svg>
      </div>
      <div className="flex w-10 items-center border-r border-[#d6d6d9] pl-1">
        <Svg w={14} h={17}>
          <path d="M2 0v17" stroke="#b0b0b4" strokeWidth="2" />
          <path d="M2 1l11 3.500L2 8z" fill="#b2b2b6" />
        </Svg>
      </div>
      <div className="mr-[97px] flex w-[47px] items-center justify-center border-r border-[#d6d6d9]">
        <button aria-label="Rechercher dans le modèle" className="flex h-[22px] w-10 items-center justify-center rounded-xs border border-[#b4b4b8] bg-linear-to-b from-white to-[#e9e9ec]">
          <Svg w={18}>
            <path d="M4 2 6 1l1.500 1v2h3V2L12 1l2 1 3 9v3h-6v-4H7v4H1v-3z" fill="#3a3a3e" />
            <path d="M4.500 4 3 11M12.500 4l1 7" stroke="#a1a1a6" strokeWidth="1.500" />
          </Svg>
        </button>
      </div>
      <div className="relative flex items-center">
        <select aria-label="Filtre de sélection" className="h-[21px] w-[154px] appearance-none border border-[#bdbdc1] bg-linear-to-b from-white to-[#f0f0f2] pl-2 text-[11px] text-[#3c3c40]">
          <option>Intelligent</option>
        </select>
        <span className="pointer-events-none absolute right-0 flex h-[21px] w-[15px] items-center justify-center border border-[#bdbdc1]">
          <Caret />
        </span>
      </div>
    </footer>
  );
}

export default function App() {
  return (
    <div className="flex min-h-screen flex-col overflow-hidden bg-[#fbfbfe] font-['Liberation_Sans',Arial,sans-serif] text-[11px] leading-4 text-[#3c3c40]">
      <TitleBar />
      <RibbonTabs />
      <Ribbon />
      <div className="flex flex-1">
        <ModelTree />
        <Viewport />
      </div>
      <StatusBar />
    </div>
  );
}
